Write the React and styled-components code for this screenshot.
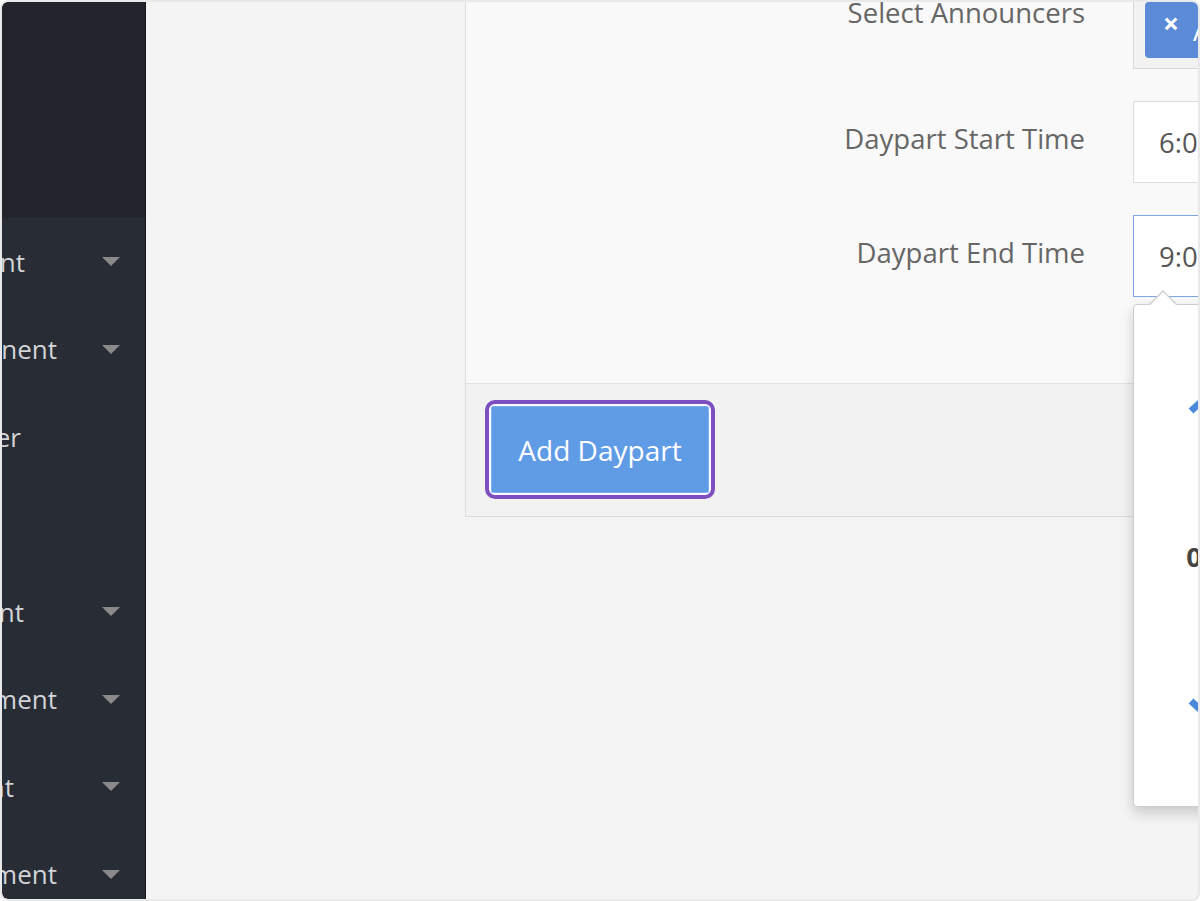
import styled, { createGlobalStyle } from "styled-components";

const GlobalStyle = createGlobalStyle`
  html, body {
    margin: 0;
    padding: 0;
    background: #ffffff;
  }
  body {
    font-family: "Open Sans", "Liberation Sans", sans-serif;
  }
  * {
    box-sizing: border-box;
  }
`;

const Frame = styled.div`
  width: 1200px;
  height: 901px;
  border: 2px solid #e9e9e9;
  border-radius: 8px;
  overflow: hidden;
  display: flex;
  background: #f4f4f4;
`;

const Sidebar = styled.aside`
  width: 144px;
  flex-shrink: 0;
  background: #282c34;
  border-right: 1px solid #15171b;
  border-radius: 6px 0 0 6px;
  display: flex;
  flex-direction: column;
  overflow: hidden;
`;

const Brand = styled.div`
  height: 216px;
  flex-shrink: 0;
  background: #22252c;
`;

const NavRow = styled.div`
  height: 87.5px;
  flex-shrink: 0;
  display: flex;
  align-items: center;
`;

const NavLabel = styled.span`
  width: ${(p) => p.$end}px;
  flex-shrink: 0;
  display: flex;
  justify-content: flex-end;
  white-space: nowrap;
  color: #d2d4d8;
  font-size: 26px;
`;

const Caret = styled.span`
  margin-left: auto;
  margin-right: 25px;
  width: 0;
  height: 0;
  border-left: 9px solid transparent;
  border-right: 9px solid transparent;
  border-top: 9px solid #8a8a8a;
`;

const Main = styled.main`
  flex: 1;
  overflow: hidden;
  padding-left: 319px;
`;

const Card = styled.section`
  width: 1000px;
  margin-top: -45px;
  border: 1px solid #dddddd;
  background: #f9f9f9;
`;

const CardBody = styled.div`
  padding: 29px 0 86px 0;
  display: flex;
  flex-direction: column;
  gap: 32px;
  border-bottom: 1px solid #e0e0e0;
`;

const FormRow = styled.div`
  display: grid;
  grid-template-columns: 619px 1fr;
  column-gap: 48px;
  align-items: ${(p) => (p.$top ? "start" : "center")};
`;

const Label = styled.label`
  text-align: right;
  font-size: 27.5px;
  color: #666666;
  margin-top: ${(p) => p.$offset || 0}px;
`;

const Field = styled.div`
  position: relative;
`;

const TagBox = styled.div`
  height: 82px;
  border: 1px solid #d8d8d8;
  background: #f2f2f2;
  padding: 0 11px 10px 11px;
  display: flex;
  align-items: flex-end;
`;

const Tag = styled.span`
  height: 56px;
  background: #5b8ad6;
  border-radius: 4px;
  color: #ffffff;
  font-size: 27.5px;
  padding: 0 18px;
  display: flex;
  align-items: center;
  gap: 14px;
  white-space: nowrap;
`;

const TagClose = styled.b`
  font-size: 28px;
  font-weight: 700;
  margin-bottom: 14px;
`;

const TimeInput = styled.div`
  height: 82px;
  width: 500px;
  background: #ffffff;
  border: 1px solid ${(p) => (p.$focused ? "#7fa6e2" : "#dddddd")};
  font-size: 27.5px;
  color: #555555;
  padding-left: 25px;
  display: flex;
  align-items: center;
`;

const Picker = styled.div`
  position: absolute;
  top: 89px;
  left: 0;
  width: 420px;
  height: 503px;
  background: #ffffff;
  border: 1px solid #cccccc;
  border-radius: 4px;
  box-shadow: 0 6px 14px rgba(0, 0, 0, 0.18);
  padding: 26px 0 27px 28px;
  z-index: 5;

  &::before {
    content: "";
    position: absolute;
    top: -15px;
    left: 14px;
    border-left: 15px solid transparent;
    border-right: 15px solid transparent;
    border-bottom: 15px solid #cfcfcf;
  }
  &::after {
    content: "";
    position: absolute;
    top: -13px;
    left: 15px;
    border-left: 14px solid transparent;
    border-right: 14px solid transparent;
    border-bottom: 14px solid #ffffff;
  }
`;

const PickerGrid = styled.div`
  display: grid;
  grid-template-columns: 80px 30px 80px 80px;
  grid-template-rows: repeat(3, 150px);
  align-items: center;
  justify-items: center;
`;

const PickerValue = styled.span`
  font-size: 27.5px;
  font-weight: 700;
  color: #444444;
`;

const Chevron = ({ down }) => (
  <svg width="30" height="20" viewBox="0 0 30 20">
    <polyline
      points={down ? "4,5 15,15 26,5" : "4,15 15,5 26,15"}
      fill="none"
      stroke="#4a89dc"
      strokeWidth="7"
      strokeLinecap="butt"
      strokeLinejoin="miter"
    />
  </svg>
);

const CardFooter = styled.div`
  background: #f2f2f2;
  padding: 16px 0 17px 19px;
`;

const Highlight = styled.span`
  display: inline-flex;
  border: 4px solid #7d4fc1;
  border-radius: 10px;
  padding: 2px;
  background: #ffffff;
`;

const Button = styled.button`
  width: 218px;
  height: 87px;
  background: #609be6;
  border: 1px solid #7fb0ee;
  border-radius: 2px;
  color: #ffffff;
  font-family: "Open Sans", "Liberation Sans", sans-serif;
  font-size: 28px;
  cursor: pointer;
`;

const navItems = [
  { label: "Content", end: 23, caret: true },
  { label: "Component", end: 55, caret: true },
  { label: "Scheduler", end: 19, caret: false },
  { label: "", end: 0, caret: false },
  { label: "Account", end: 22, caret: true },
  { label: "Management", end: 55, caret: true },
  { label: "Account", end: 12, caret: true },
  { label: "Settlement", end: 55, caret: true },
];

export default function App() {
  return (
    <>
      <GlobalStyle />
      <Frame>
        <Sidebar>
          <Brand />
          {navItems.map((item, i) => (
            <NavRow key={i}>
              <NavLabel $end={item.end}>{item.label}</NavLabel>
              {item.caret && <Caret />}
            </NavRow>
          ))}
        </Sidebar>
        <Main>
          <Card>
            <CardBody>
              <FormRow $top>
                <Label $offset={7}>Select Announcers</Label>
                <TagBox>
                  <Tag>
                    <TagClose>×</TagClose>
                    Andy Mason
                  </Tag>
                </TagBox>
              </FormRow>
              <FormRow>
                <Label $offset={-7}>Daypart Start Time</Label>
                <TimeInput>6:00 AM</TimeInput>
              </FormRow>
              <FormRow>
                <Label $offset={-7}>Daypart End Time</Label>
                <Field>
                  <TimeInput $focused>9:00 AM</TimeInput>
                  <Picker>
                    <PickerGrid>
                      <Chevron />
                      <span />
                      <Chevron />
                      <span />
                      <PickerValue>09</PickerValue>
                      <PickerValue>:</PickerValue>
                      <PickerValue>00</PickerValue>
                      <PickerValue>AM</PickerValue>
                      <Chevron down />
                      <span />
                      <Chevron down />
                      <span />
                    </PickerGrid>
                  </Picker>
                </Field>
              </FormRow>
            </CardBody>
            <CardFooter>
              <Highlight>
                <Button>Add Daypart</Button>
              </Highlight>
            </CardFooter>
          </Card>
        </Main>
      </Frame>
    </>
  );
}
